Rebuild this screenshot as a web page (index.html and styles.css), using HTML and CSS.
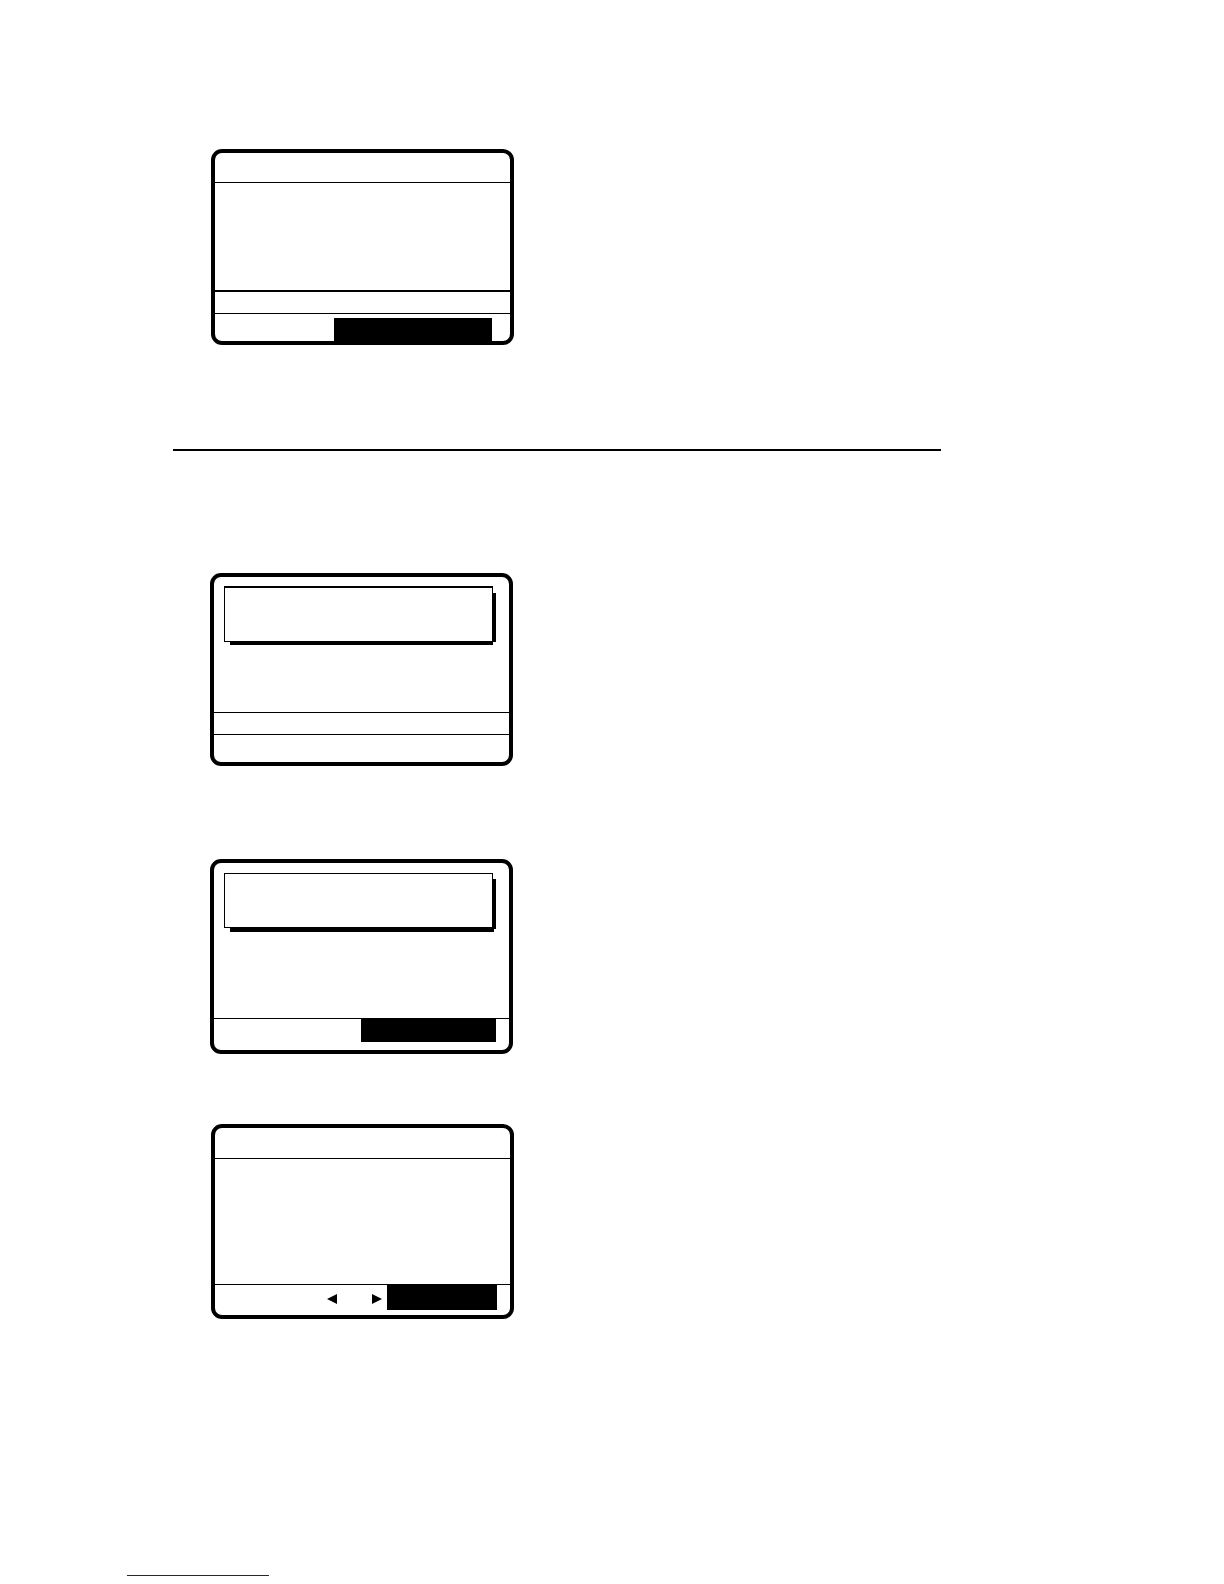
FILE: index.html
```
<!DOCTYPE html>
<html lang="en">
<head>
    <meta charset="UTF-8">
    <meta name="viewport" content="width=device-width, initial-scale=1.0">
    <title>Display screens</title>
    <link rel="stylesheet" href="styles.css">
</head>
<body>

<main class="page">
    <section class="step step-first">
        <div class="screen screen-status">
            <div class="screen-title"></div>
            <div class="screen-body"></div>
            <div class="screen-info thick"></div>
            <div class="screen-footer">
                <div class="highlight wide"></div>
            </div>
        </div>
    </section>

    <hr class="divider">

    <section class="step">
        <div class="screen screen-message">
            <div class="message-box thick"></div>
            <div class="screen-body"></div>
            <div class="screen-info"></div>
            <div class="screen-footer"></div>
        </div>

        <div class="screen screen-prompt">
            <div class="message-box"></div>
            <div class="screen-body"></div>
            <div class="screen-footer">
                <div class="highlight medium"></div>
            </div>
        </div>

        <div class="screen screen-select">
            <div class="screen-title"></div>
            <div class="screen-body"></div>
            <div class="screen-footer">
                <div class="arrows">
                    <button type="button" class="arrow" aria-label="Previous">
                        <svg width="10" height="10" viewBox="0 0 10 10"><path d="M10 0v10L0 5z"/></svg>
                    </button>
                    <button type="button" class="arrow" aria-label="Next">
                        <svg width="10" height="10" viewBox="0 0 10 10"><path d="M0 0v10l10-5z"/></svg>
                    </button>
                </div>
                <div class="highlight narrow"></div>
            </div>
        </div>
    </section>
</main>

<footer class="page-footer">
    <a class="footer-link" href="#" aria-label="Back to top"></a>
</footer>

</body>
</html>
```

FILE: styles.css
```
* {
    box-sizing: border-box;
}
body {
    font-family: "Liberation Sans", Arial, sans-serif;
    margin: 0;
    background-color: #fff;
    color: #000;
}
.page {
    max-width: 941px;
    padding: 149px 0 0 173px;
}
.step {
    display: flex;
    flex-direction: column;
    padding-left: 37px;
}
.step-first {
    padding-left: 38px;
}
.divider {
    height: 2px;
    margin: 104px 0 122px;
    border: 0;
    background-color: #000;
}

/* LCD screens */
.screen {
    display: flex;
    flex-direction: column;
    width: 303px;
    max-width: 100%;
    min-height: 195px;
    border: 4px solid #000;
    border-radius: 11px;
}
.screen-status {
    min-height: 196px;
}
.screen-message {
    min-height: 193px;
    margin-bottom: 93px;
}
.screen-prompt {
    margin-bottom: 70px;
}
.screen-select {
    margin-left: 1px;
}
.screen-title {
    height: 30px;
    border-bottom: 1px solid #000;
}
.screen-select .screen-title {
    height: 31px;
}
.screen-body {
    flex: 1;
}
.screen-info {
    height: 22px;
    border-top: 1px solid #000;
}
.screen-info.thick {
    height: 23px;
    border-top-width: 2px;
}
.screen-footer {
    display: flex;
    align-items: flex-start;
    justify-content: flex-end;
    height: 32px;
    padding-right: 13px;
    border-top: 1px solid #000;
}
.screen-message .screen-footer {
    height: 28px;
}
.screen-status .screen-footer {
    height: 28px;
    padding: 4px 18px 0 0;
}
.screen-select .screen-footer {
    height: 31px;
}

/* Selected area in the footer row */
.highlight {
    height: 23px;
    background-color: #000;
}
.highlight.wide {
    width: 158px;
}
.highlight.medium {
    width: 135px;
}
.highlight.narrow {
    width: 110px;
    height: 25px;
}

.arrows {
    display: flex;
    gap: 35px;
    padding: 9px 5px 0 0;
}
.arrow {
    display: block;
    width: 10px;
    height: 10px;
    padding: 0;
    border: 0;
    background: none;
    cursor: pointer;
}
.arrow svg {
    display: block;
}

/* Message box with a hard drop shadow */
.message-box {
    position: relative;
    height: 55px;
    margin: 10px 16px 0 10px;
    border: 1px solid #000;
}
.message-box.thick {
    height: 56px;
    margin-top: 9px;
    border-top-width: 2px;
}
.message-box::before,
.message-box::after {
    content: "";
    position: absolute;
    background-color: #000;
}
.message-box::before {
    top: 5px;
    right: -4px;
    bottom: -2px;
    width: 3px;
}
.message-box::after {
    left: 5px;
    right: -2px;
    bottom: -5px;
    height: 4px;
}
.message-box.thick::before {
    bottom: -1px;
}
.message-box.thick::after {
    right: -1px;
    bottom: -4px;
    height: 3px;
}

.page-footer {
    padding: 256px 0 8px 127px;
}
.footer-link {
    display: block;
    width: 142px;
    border-bottom: 1px solid #1a1a8c;
}
```
